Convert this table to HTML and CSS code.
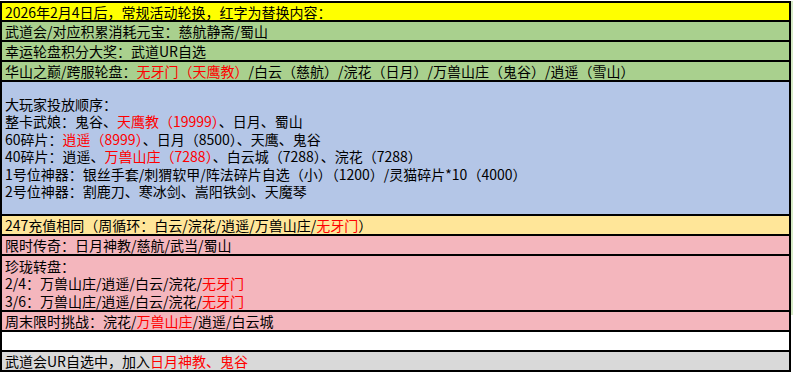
FILE: index.html
```html
<!DOCTYPE html>
<html lang="zh-CN">
<head>
<meta charset="utf-8">
<title>常规活动轮换</title>
<link rel="stylesheet" href="styles.css">
</head>
<body>
<div class="page">
  <div class="sheet">
    <div class="row first yellow">2026年2月4日后，常规活动轮换，红字为替换内容：</div>
    <div class="row green">武道会/对应积累消耗元宝：慈航静斋/蜀山</div>
    <div class="row green">幸运轮盘积分大奖：武道UR自选</div>
    <div class="row green">华山之巅/跨服轮盘：<span class="red">无牙门（天鹰教）</span>/白云（慈航）/浣花（日月）/万兽山庄（鬼谷）/逍遥（雪山）</div>
    <div class="row multi blue">
      <div class="line">大玩家投放顺序：</div>
      <div class="line">整卡武娘：鬼谷、<span class="red">天鹰教（19999）</span>、日月、蜀山</div>
      <div class="line">60碎片：<span class="red">逍遥（8999）</span>、日月（8500）、天鹰、鬼谷</div>
      <div class="line">40碎片：逍遥、<span class="red">万兽山庄（7288）</span>、白云城（7288）、浣花（7288）</div>
      <div class="line">1号位神器：银丝手套/刺猬软甲/阵法碎片自选（小）（1200）/灵猫碎片*10（4000）</div>
      <div class="line">2号位神器：割鹿刀、寒冰剑、嵩阳铁剑、天魔琴</div>
    </div>
    <div class="row gold">247充值相同（周循环：白云/浣花/逍遥/万兽山庄/<span class="red">无牙门</span>）</div>
    <div class="row pink">限时传奇：日月神教/慈航/武当/蜀山</div>
    <div class="row multi pink tall">
      <div class="line">珍珑转盘：</div>
      <div class="line">2/4：万兽山庄/逍遥/白云/浣花/<span class="red">无牙门</span></div>
      <div class="line">3/6：万兽山庄/逍遥/白云/浣花/<span class="red">无牙门</span></div>
    </div>
    <div class="row pink">周末限时挑战：浣花/<span class="red">万兽山庄</span>/逍遥/白云城</div>
    <div class="row white"></div>
    <div class="row grey">武道会UR自选中，加入<span class="red">日月神教、鬼谷</span></div>
  </div>
  <div class="edge"></div>
</div>
</body>
</html>
```

FILE: styles.css
```css
html, body {
  margin: 0;
  padding: 0;
  background: #ffffff;
}

body {
  font-family: "Noto Sans CJK SC", "Noto Sans", sans-serif;
  font-size: 14px;
  color: #000000;
}

.page {
  display: flex;
  align-items: flex-start;
  padding-top: 1px;
}

.sheet {
  width: 791px;
  box-sizing: border-box;
  border: 2px solid #000000;
  border-bottom: none;
}

.edge {
  width: 2px;
  height: 314px;
  background: #d6eac6;
}

.row {
  height: 18px;
  line-height: 18px;
  padding-left: 3px;
  border-bottom: 2px solid #000000;
  white-space: nowrap;
}

.row.first {
  height: 17px;
}

.row.multi {
  height: 134px;
  box-sizing: border-box;
  padding-top: 13.5px;
  line-height: 17.5px;
}

.row.multi.tall {
  height: 56px;
  padding-top: 1.5px;
}

.line {
  height: 17.5px;
}

.yellow { background: #ffff00; }
.green  { background: #a9d08e; }
.blue   { background: #b4c6e7; }
.gold   { background: #ffe699; }
.pink   { background: #f4b6bd; }
.white  { background: #ffffff; }
.grey   { background: #d9d9d9; }

.red { color: #ff0000; }
```
